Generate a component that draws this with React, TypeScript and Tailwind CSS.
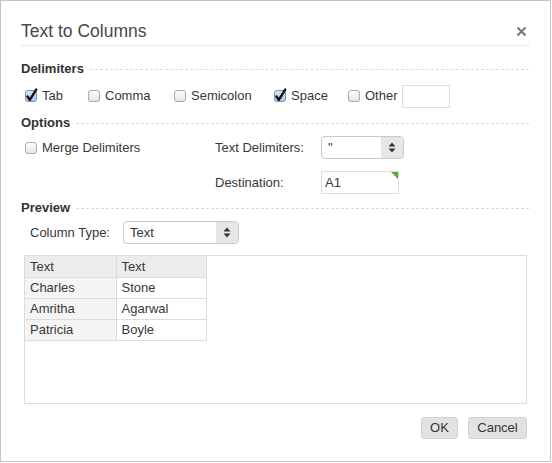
import React from "react";

const font = { fontFamily: '"Liberation Sans", Arial, sans-serif' };

const CheckBox = ({ checked }: { checked?: boolean }) => (
  <svg width="14" height="14" viewBox="0 0 14 14" className="shrink-0 overflow-visible">
    <defs>
      <linearGradient id="cbOff" x1="0" y1="0" x2="0" y2="1">
        <stop offset="0" stopColor="#ffffff" />
        <stop offset="1" stopColor="#e4e4e4" />
      </linearGradient>
      <linearGradient id="cbOn" x1="0" y1="0" x2="0" y2="1">
        <stop offset="0" stopColor="#d7e6f8" />
        <stop offset="1" stopColor="#a9c6ea" />
      </linearGradient>
    </defs>
    <rect
      x="1.5"
      y="1.5"
      width="11"
      height="11"
      rx="2.5"
      fill={checked ? "url(#cbOn)" : "url(#cbOff)"}
      stroke={checked ? "#7d93b4" : "#a9a9a9"}
    />
    {checked && (
      <path
        d="M3.4 7.4 L5.8 10.8 L12.2 0.6"
        fill="none"
        stroke="#111"
        strokeWidth="2.4"
        strokeLinecap="round"
        strokeLinejoin="round"
      />
    )}
  </svg>
);

const Check = ({ label, checked, w }: { label: string; checked?: boolean; w: string }) => (
  <label className={`flex items-center gap-[4px] ${w}`}>
    <CheckBox checked={checked} />
    <span>{label}</span>
  </label>
);

const Section = ({ title }: { title: string }) => (
  <div className="flex items-center h-[18px] gap-[6px]">
    <span className="font-bold text-[#333]">{title}</span>
    <div className="flex-1 border-t border-dashed border-[#dcdcdc]" />
  </div>
);

const Select = ({ value, w }: { value: string; w: string }) => (
  <div className={`flex h-[23px] ${w} border border-[#c9c9c9] rounded-[4px] overflow-hidden bg-white`}>
    <span className="flex-1 flex items-center pl-[6px] text-[#333]">{value}</span>
    <span className="w-[22px] bg-[#e6e6e6] flex items-center justify-center">
      <svg width="8" height="11" viewBox="0 0 8 11">
        <path d="M4 0.5 L7.5 4.5 L0.5 4.5 Z" fill="#333" />
        <path d="M4 10.5 L7.5 6.5 L0.5 6.5 Z" fill="#333" />
      </svg>
    </span>
  </div>
);

const rows = [
  ["Charles", "Stone"],
  ["Amritha", "Agarwal"],
  ["Patricia", "Boyle"],
];

const App = () => {
  return (
    <div
      style={font}
      className="w-[551px] h-[462px] border border-[#c4c4c4] bg-white text-[13px] text-[#383838] pl-[20px] pr-[21px] flex flex-col"
    >
      {/* Header */}
      <div className="flex items-center h-[22px] mt-[19px] pr-[1px]">
        <h1 className="text-[17.5px] text-[#484848] flex-1">Text to Columns</h1>
        <svg width="11" height="11" viewBox="0 0 11 11" className="mr-[1px]">
          <path d="M1.5 1.5 L9.5 9.5 M9.5 1.5 L1.5 9.5" stroke="#7a7a7a" strokeWidth="2.2" />
        </svg>
      </div>
      <div className="mt-[3px] border-t border-dotted border-[#d8d8d8]" />

      <div className="mt-[14px]">
        <Section title="Delimiters" />
      </div>
      <div className="flex items-center h-[24px] mt-[6px] pl-[3px]">
        <Check label="Tab" checked w="w-[63px]" />
        <Check label="Comma" w="w-[86px]" />
        <Check label="Semicolon" w="w-[100px]" />
        <Check label="Space" checked w="w-[74px]" />
        <Check label="Other" w="w-[55px]" />
        <div className="w-[48px] h-[23px] border border-[#dcdcdc] bg-white" />
      </div>

      <div className="mt-[6px]">
        <Section title="Options" />
      </div>
      <div className="flex items-center h-[23px] mt-[4px] pl-[3px]">
        <Check label="Merge Delimiters" w="w-[191px]" />
        <span className="w-[106px]">Text Delimiters:</span>
        <Select value={'"'} w="w-[83px]" />
      </div>
      <div className="flex items-center h-[23px] mt-[12px] pl-[194px]">
        <span className="w-[106px]">Destination:</span>
        <div className="relative w-[78px] h-[23px] border border-[#dcdcdc] bg-white flex items-center pl-[3px]">
          A1
          <span className="absolute top-0 right-0 w-0 h-0 border-t-[7px] border-l-[7px] border-t-[#5fa92a] border-l-transparent" />
        </div>
      </div>

      <div className="mt-[5px]">
        <Section title="Preview" />
      </div>
      <div className="flex items-center h-[23px] mt-[4px] pl-[9px]">
        <span className="w-[93px]">Column Type:</span>
        <Select value="Text" w="w-[116px]" />
      </div>

      <div className="mt-[11px] ml-[3px] w-[503px] h-[149px] border border-[#dcdcdc] bg-white">
        <table className="border-collapse text-[13px]">
          <thead>
            <tr className="h-[21px] bg-[#ececec]">
              <th className="w-[91px] border border-t-0 border-l-0 border-[#dcdcdc] font-normal text-left pl-[5px] py-0">Text</th>
              <th className="w-[90px] border border-t-0 border-[#dcdcdc] font-normal text-left pl-[5px] py-0">Text</th>
            </tr>
          </thead>
          <tbody>
            {rows.map(([a, b]) => (
              <tr key={a} className="h-[21px]">
                <td className="border border-l-0 border-[#dcdcdc] bg-[#f4f4f4] pl-[5px] py-0">{a}</td>
                <td className="border border-[#dcdcdc] bg-white pl-[5px] py-0">{b}</td>
              </tr>
            ))}
          </tbody>
        </table>
      </div>

      <div className="flex justify-end gap-[10px] mt-[13px] pr-[2px]">
        <button className="w-[37px] h-[22px] bg-[#e2e2e2] border border-[#d2d2d2] rounded-[3px] text-[#333]">OK</button>
        <button className="w-[59px] h-[22px] bg-[#e2e2e2] border border-[#d2d2d2] rounded-[3px] text-[#333]">Cancel</button>
      </div>
    </div>
  );
};

export default App;
